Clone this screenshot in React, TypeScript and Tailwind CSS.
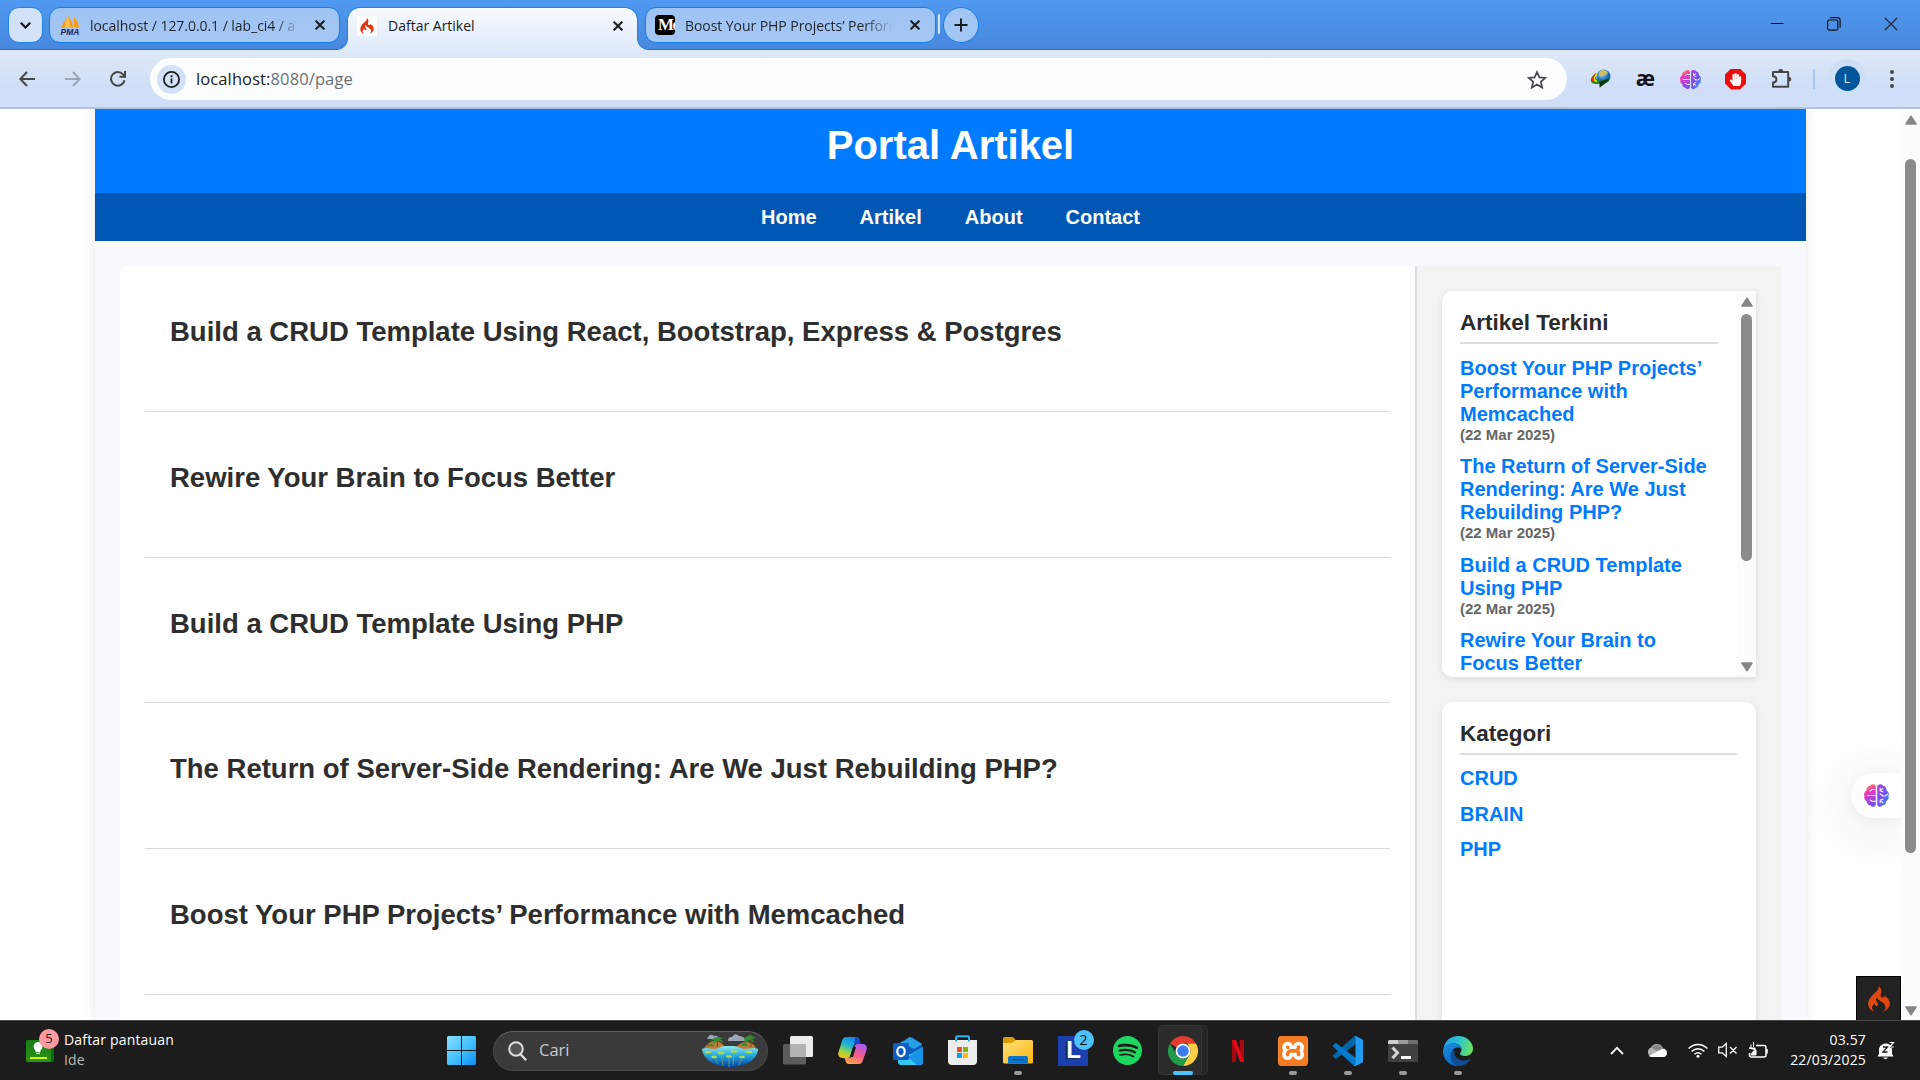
import type { ReactNode } from "react";
import { SiCodeigniter, SiSpotify, SiXampp } from "react-icons/si";
import { FaHandPaper } from "react-icons/fa";

const articles = [
  "Build a CRUD Template Using React, Bootstrap, Express & Postgres",
  "Rewire Your Brain to Focus Better",
  "Build a CRUD Template Using PHP",
  "The Return of Server-Side Rendering: Are We Just Rebuilding PHP?",
  "Boost Your PHP Projects’ Performance with Memcached",
];

const recent = [
  "Boost Your PHP Projects’ Performance with Memcached",
  "The Return of Server-Side Rendering: Are We Just Rebuilding PHP?",
  "Build a CRUD Template Using PHP",
  "Rewire Your Brain to Focus Better",
];

const categories = ["CRUD", "BRAIN", "PHP"];

function CloseX({ size = 10, w = 2 }: { size?: number; w?: number }) {
  return (
    <svg width={size} height={size} viewBox="0 0 10 10" className="shrink-0" stroke="#1b1b1b" strokeWidth={w} fill="none">
      <path d="M.6.6l8.8 8.8M9.4.6L.6 9.4" />
    </svg>
  );
}

function Brain({ size, id }: { size: number; id: string }) {
  return (
    <svg width={size} height={size} viewBox="0 0 24 24" className="shrink-0">
      <defs>
        <linearGradient id={id + "l"} x1="0.3" y1="0" x2="0.6" y2="1">
          <stop offset="0" stopColor="#fb923c" />
          <stop offset="0.35" stopColor="#f032c0" />
          <stop offset="1" stopColor="#6f55f5" />
        </linearGradient>
        <linearGradient id={id + "r"} x1="0" y1="0" x2="1" y2="1">
          <stop offset="0" stopColor="#b43be0" />
          <stop offset="0.55" stopColor="#6a55f0" />
          <stop offset="1" stopColor="#22b0ff" />
        </linearGradient>
      </defs>
      <path
        d="M11.3 3.2C10.700.6 6.700.4 5.600 2.900 3.200 3 2 5.200 2.500 7.200 0 8.300-.3 11 .5 12.500-.2 14.500.8 16.600 2.600 17.200 2.600 20 4.300 21.600 6.200 21.400 7.500 23.500 10.800 23.300 11.300 20.800Z"
        fill={`url(#${id}l)`}
      />
      <path
        d="M12.700 3.200C13.300.6 17.300.4 18.400 2.900 20.800 3 22 5.200 21.500 7.200 24 8.300 24.300 11 23.500 12.500 24.200 14.500 23.200 16.600 21.400 17.200 21.400 20 19.700 21.600 17.800 21.400 16.500 23.500 13.200 23.300 12.700 20.800Z"
        fill={`url(#${id}r)`}
      />
      <path
        d="M11.300 6.200H7.500L5.500 8M11.300 12H3M11.300 17.600H8L5.500 16M15.500 4.500V7.500L18.500 8.500M15.500 7L18.500 5M17 12.500H20.500L23 10.500M15 10L18.500 12.500M15.500 19.500V16.500L18.500 15.500M15.500 17L18.500 19"
        stroke="#f6eaff"
        strokeWidth="1.1"
        fill="none"
      />
    </svg>
  );
}

function WindowBar() {
  return (
    <div className="flex h-[50px] items-start border-b border-[#0f78dc] bg-linear-to-b from-[#5099f0] to-[#4788de] pl-2 pt-[7px]">
      <div className="flex h-[36px] w-[35px] items-center justify-center rounded-[11px] border border-[#1b84e6] bg-[#d3e2f8]">
        <svg width="11" height="7" viewBox="0 0 11 7" fill="none" stroke="#1b1b1b" strokeWidth="2.200">
          <path d="M.8.8l4.700 4.700L10.200.8" />
        </svg>
      </div>
      <div className="ml-[6px] flex h-[36px] w-[291px] items-center rounded-[11px] border border-[#0f80e8] bg-linear-to-b from-[#9fc4f3] to-[#a4c6f3] pl-[10px] pr-[14px]">
        <svg width="21" height="20" viewBox="0 0 21 20" className="shrink-0 overflow-visible">
          <path d="M7 12V3C5 5 2.500 9 1 13l6-1ZM8 12V1c2.500 2.500 4.500 7 5 11H8ZM14 12V1.500c2.500 3 4.500 7 5 11l-5-.5Z" fill="#f89c0e" />
          <path d="M5 12C5 8 6 5 7 3v9ZM10 12c0-3-.5-7-2-10v10Z" fill="#ffc355" />
          <text x="10" y="20" fontSize="8.500" fontWeight="700" fontStyle="italic" textAnchor="middle" textLength="19" fill="#20235e" fontFamily="Liberation Sans, sans-serif">
            PMA
          </text>
        </svg>
        <span className="ml-[9px] w-[210px] overflow-hidden whitespace-nowrap text-[14px] tracking-[-0.05px] text-[#1f242c] [mask-image:linear-gradient(to_right,black_88%,transparent_100%)]">
          localhost / 127.0.0.1 / lab_ci4 / a
        </span>
        <span className="ml-auto flex">
          <CloseX />
        </span>
      </div>
      <div className="relative ml-[7px] flex h-[43px] w-[291px] items-start rounded-t-[13px] border-x border-t border-[#1b84e6] bg-linear-to-b from-[#f7fafe] to-[#e0eaf9]">
        <span className="absolute bottom-0 -left-[12px] h-3 w-3 bg-[radial-gradient(circle_at_0_0,transparent_11px,#0f78dc_11.500px,#e0eaf9_12.500px)]" />
        <span className="absolute -right-[12px] bottom-0 h-3 w-3 bg-[radial-gradient(circle_at_100%_0,transparent_11px,#0f78dc_11.500px,#e0eaf9_12.500px)]" />
        <div className="flex h-[35px] w-full items-center pl-[9px] pr-[14px]">
          <span className="flex h-5 w-5 items-center justify-center bg-white">
            <SiCodeigniter size={16} color="#dd3510" />
          </span>
          <span className="ml-[11px] text-[14px] text-[#1b1b1b]">Daftar Artikel</span>
          <span className="ml-auto flex">
            <CloseX />
          </span>
        </div>
      </div>
      <div className="ml-[7px] flex h-[36px] w-[291px] items-center rounded-[11px] border border-[#0f80e8] bg-linear-to-b from-[#9fc4f3] to-[#a4c6f3] pl-[9px] pr-[15px]">
        <span className="flex h-5 w-5 items-center overflow-hidden rounded-[4px] bg-black pl-[3px] font-['Liberation_Serif',serif] text-[17px] font-bold tracking-[-1.5px] text-white">Me</span>
        <span className="ml-[10px] w-[208px] overflow-hidden whitespace-nowrap text-[14px] tracking-[-0.06px] text-[#1f242c] [mask-image:linear-gradient(to_right,black_86%,transparent)]">
          Boost Your PHP Projects’ Performance
        </span>
        <span className="ml-auto flex">
          <CloseX />
        </span>
      </div>
      <span className="ml-[2px] mt-[7px] h-5 w-[2px] rounded bg-[#d5e5fa]" />
      <span className="ml-[3px] flex h-[36px] w-[36px] items-center justify-center rounded-full border border-[#0f80e8] bg-[#a2c6f4]">
        <svg width="14" height="14" viewBox="0 0 14 14" stroke="#1b1b1b" strokeWidth="1.900">
          <path d="M7 .5v13M.5 7h13" />
        </svg>
      </span>
      <div className="ml-auto mr-[22px] mt-[10px] flex items-center gap-[43px]">
        <svg width="14" height="14" viewBox="0 0 14 14" stroke="#111">
          <path d="M.5 6.500h13" />
        </svg>
        <svg width="14" height="14" viewBox="0 0 14 14" stroke="#111" fill="none" strokeWidth="1.200">
          <rect x=".6" y="3" width="10.200" height="10.200" rx="1.800" />
          <path d="M3 .7h7.500a2.600 2.600 0 0 1 2.600 2.600v7.500" />
        </svg>
        <span className="flex">
          <CloseX size={14} w={0.9} />
        </span>
      </div>
    </div>
  );
}

function Toolbar() {
  return (
    <div className="flex h-[59px] items-center border-b-2 border-[#b4c3dc] bg-linear-to-b from-[#dfe9f8] to-[#d0dff7] to-60% pl-[19px]">
      <svg width="16" height="16" viewBox="0 0 16 16" fill="none" stroke="#474747" strokeWidth="2">
        <path d="M16 8H1.500M8 1L1.300 8 8 15" />
      </svg>
      <svg width="16" height="16" viewBox="0 0 16 16" fill="none" stroke="#9aa5b5" strokeWidth="2" className="ml-[30px]">
        <path d="M0 8h14.500M8 1l6.700 7L8 15" />
      </svg>
      <svg width="16" height="16" viewBox="0 0 16 16" fill="none" stroke="#474747" strokeWidth="2" className="ml-[29px]">
        <path d="M14.500 9.200A6.800 6.800 0 1 1 13 3.400L15 5.600M15 0v5.700H9.400" />
      </svg>
      <div className="mt-px ml-[24px] flex h-[42px] w-[1417px] items-center rounded-full bg-[#fcfdff] pl-[7px] pr-[20px]">
        <span className="flex h-[29px] w-[29px] items-center justify-center rounded-full bg-[#d3e2f8]">
          <svg width="17" height="17" viewBox="0 0 17 17" fill="none" stroke="#1f1f1f" strokeWidth="1.800">
            <circle cx="8.500" cy="8.500" r="7.600" />
            <path d="M8.500 7.500v5M8.500 4.300v1.900" />
          </svg>
        </span>
        <span className="ml-[10px] pt-px text-[16.500px] tracking-[0.11px] text-[#202124]">
          localhost:<span className="text-[#6b6f76]">8080/page</span>
        </span>
        <svg width="20" height="19" viewBox="0 0 20 19" className="ml-auto" fill="none" stroke="#474747" strokeWidth="1.700">
          <path d="M10 2l2.400 5.400 5.900.5-4.500 3.900 1.400 5.800L10 14.500l-5.200 3.100 1.400-5.800L1.700 7.900l5.900-.5Z" />
        </svg>
      </div>
      <svg width="21" height="20" viewBox="0 0 21 20" className="mt-px ml-[23px]">
        <defs>
          <radialGradient id="globe" cx=".4" cy=".3">
            <stop stopColor="#a9e0f5" />
            <stop offset="1" stopColor="#1261b8" />
          </radialGradient>
        </defs>
        <circle cx="13.500" cy="7.500" r="7" fill="url(#globe)" />
        <path d="M12 1c5 0 7 3 5 4s-4 0-6 2-3-4 1-6Z" fill="#d6bd57" />
        <path d="M6 4C0 8-.5 13 3 14.500c2 1 5 .5 7 .3v3.700l8.500-6.500V9L10 12c-3-1-5-3-4-8Z" fill="#1f8d18" />
        <path d="M6 5C1 9 1 12 5 12.500" stroke="#f42b0c" strokeWidth="1.500" fill="none" />
        <path d="M6.800 5C3 9 4 11.500 7 12.500" stroke="#ffe31e" strokeWidth="1.500" fill="none" />
        <path d="M9.500 12.500v6L19 11l-1-1Z" fill="#06350a" />
      </svg>
      <span className="mt-[-1px] ml-[24px] w-[20px] text-center font-['Noto_Sans',sans-serif] text-[21px] leading-5 font-bold tracking-[-1px] text-[#17131a]">æ</span>
      <span className="mt-px ml-[25px] flex">
        <Brain size={21} id="ba" />
      </span>
      <span className="mt-px ml-[24px] flex h-[21px] w-[21px] items-center justify-center bg-[#ee0c0c] [clip-path:polygon(29%_0,71%_0,100%_29%,100%_71%,71%_100%,29%_100%,0_71%,0_29%)]">
        <FaHandPaper size={13} color="#fff" />
      </span>
      <svg width="21" height="21" viewBox="0 0 21 21" className="ml-[25px]" fill="none" stroke="#474747" strokeWidth="2">
        <path d="M2 4h15.200v14.800H2v-4.300c4.500-.2 4.500-6 0-6.200Z" strokeLinejoin="round" />
        <path d="M7.200 3.500a2.500 2.500 0 0 1 5 0ZM18 9a2.300 2.300 0 0 1 0 4.600Z" fill="#474747" stroke="none" />
      </svg>
      <span className="ml-[21px] h-5 w-[2px] bg-[#a5c8f5]" />
      <span className="ml-[12px] flex h-10 w-10 items-center justify-center rounded-full bg-[#cfdff6]">
        <span className="flex h-[25px] w-[25px] items-center justify-center rounded-full bg-[#00569d] text-[13px] text-[#d5e5f5]">L</span>
      </span>
      <span className="ml-[23px] flex flex-col gap-[3px]">
        {[0, 1, 2].map((i) => (
          <span key={i} className="h-[4px] w-[4px] rounded-full bg-[#474747]" />
        ))}
      </span>
    </div>
  );
}

function ScrollArrow({ down = false }: { down?: boolean }) {
  return (
    <svg width="12" height="10" viewBox="0 0 12 10" className={down ? "rotate-180" : ""}>
      <path d="M6 1.200L11 9H1Z" fill="#858585" stroke="#858585" strokeWidth="1.500" strokeLinejoin="round" />
    </svg>
  );
}

function SideTitle({ children }: { children: ReactNode }) {
  return <h3 className="h-[35px] border-b-2 border-[#ddd] text-[22.500px] leading-[27px] font-bold text-[#2b2b2b]">{children}</h3>;
}

function Page() {
  return (
    <div className="relative flex h-[911px] overflow-hidden bg-white font-['Liberation_Sans',Arial,sans-serif]">
      <div className="ml-[95px] w-[1711px] shrink-0 bg-[#f8f9fc] shadow-[0_0_12px_rgba(0,0,0,0.1)]">
        <header className="flex h-[84px] justify-center bg-[#007bff] pt-[13px]">
          <h1 className="text-[40px] leading-[46px] font-bold text-white">Portal Artikel</h1>
        </header>
        <nav className="flex h-[48px] items-center justify-center gap-[43px] bg-[#0056b3] text-[20px] font-bold text-white">
          <a>Home</a>
          <a>Artikel</a>
          <a>About</a>
          <a>Contact</a>
        </nav>
        <div className="flex h-[800px] px-[25px] pt-[25px]">
          <main className="w-[1295px] rounded-tl-[7px] rounded-tr-[7px] bg-white px-[25px]">
            {articles.map((title) => (
              <article key={title} className="h-[145.750px] border-b border-[#d9dcde] pl-[25px] pt-[50px]">
                <h2 className="text-[27.500px] leading-[32px] font-bold text-[#2e2e2e]">{title}</h2>
              </article>
            ))}
          </main>
          <aside className="w-[366px] border-l-2 border-[#ddd] bg-[#f3f3f3] pl-[25px] pt-[25px]">
            <section className="flex h-[386px] w-[314px] overflow-hidden rounded-l-[10px] bg-white shadow-[0_2px_6px_rgba(0,0,0,0.1)]">
              <div className="w-[276px] pl-[18px] pt-[18px]">
                <SideTitle>Artikel Terkini</SideTitle>
                <ul className="pt-[12.700px]">
                  {recent.map((title) => (
                    <li key={title} className="mb-[11.500px] w-[258px] font-bold">
                      <a className="block text-[20px] leading-[23px] text-[#007bff]">{title}</a>
                      <span className="block h-[18px] text-[15px] leading-[18px] text-[#666]">(22 Mar 2025)</span>
                    </li>
                  ))}
                </ul>
              </div>
              <div className="ml-auto flex w-[19px] flex-col items-center bg-[#fcfcfc] pt-[6px] pb-[5px]">
                <ScrollArrow />
                <span className="mt-[7px] h-[247px] w-[11px] rounded-full bg-[#8b8b8b]" />
                <span className="mt-auto flex">
                  <ScrollArrow down />
                </span>
              </div>
            </section>
            <section className="mt-[25px] h-[500px] w-[314px] rounded-[10px] bg-white px-[18px] pt-[18px] pr-[19px] shadow-[0_2px_6px_rgba(0,0,0,0.1)]">
              <SideTitle>Kategori</SideTitle>
              <ul className="flex flex-col gap-[12.500px] pt-[12px] text-[20px] leading-[23px] font-bold text-[#007bff]">
                {categories.map((c) => (
                  <li key={c}>{c}</li>
                ))}
              </ul>
            </section>
          </aside>
        </div>
      </div>
      <div className="absolute top-[664px] right-[19px] flex h-[45px] w-[50px] items-center rounded-l-full bg-white pl-[13px] shadow-[0_8px_60px_rgba(0,0,0,0.12),0_2px_14px_rgba(0,0,0,0.05)]">
        <Brain size={25} id="bb" />
      </div>
      <div className="absolute right-[19px] bottom-0 flex h-[44px] w-[45px] items-center justify-center border border-b-0 border-black bg-[#222]">
        <SiCodeigniter size={26} color="#e2470f" />
      </div>
      <div className="relative ml-auto flex w-[19px] flex-col items-center bg-[#fcfcfc] pt-[6px] pb-1">
        <ScrollArrow />
        <span className="mt-[34px] h-[694px] w-[11px] rounded-full bg-[#8b8b8b]" />
        <span className="mt-auto flex">
          <ScrollArrow down />
        </span>
      </div>
    </div>
  );
}

function TaskButton({ children, running = false, active = false }: { children: ReactNode; running?: boolean; active?: boolean }) {
  return (
    <div className="relative flex h-[59px] w-[55px] items-center justify-center">
      {active && <span className="absolute top-[4px] left-[4px] h-[50px] w-[49px] rounded-[5px] border border-[#303030] bg-[#242424]" />}
      {active && <span className="absolute top-[4px] left-[3px] h-[50px] w-[44px] rounded-[5px] border border-[#393939] bg-[#2b2b2b]" />}
      <span className="relative flex">{children}</span>
      {running && !active && <span className="absolute bottom-[5px] h-[4px] w-2 rounded-full bg-[#9a9a9a]" />}
      {active && <span className="absolute bottom-[5px] h-[4px] w-5 rounded-full bg-[#4cc2ff]" />}
    </div>
  );
}

function Island() {
  return (
    <svg width="58" height="34" viewBox="0 0 58 34">
      <defs>
        <linearGradient id="sea" x1="0" y1="0" x2="0" y2="1">
          <stop stopColor="#8be9ef" />
          <stop offset=".45" stopColor="#25a9dc" />
          <stop offset="1" stopColor="#063f9e" />
        </linearGradient>
      </defs>
      <path d="M7 3q3-4 6-1 4-1 5 3H6ZM27 6q0-3 4-3 3-5 7-1 5 0 7 5H27Z" fill="#9aa5b5" />
      <path d="M3 14c5-6 8-7 11-7 4 0 8 2 10 7-7 2-14 2-21 0ZM34 14c4-4 7-6 11-6 4 0 8 2 10 6-6 3-14 3-21 0Z" fill="#bd7a35" />
      <path d="M1 15c4-2 8 0 13 0 4 0 6-3 9-3h10c4 0 6 3 11 3 5 0 9-2 13 0 0 10-12 18-28 18S2 25 1 15Z" fill="url(#sea)" />
      <path d="M8 7l7-4 8 1-4 1 4 3-6-1-5 3 1-4ZM43 4l6-3 6 3-4 1 3 4-5-3-5 3ZM6 11l5-1 3 2H6ZM40 10l5-1 2 3h-6Z" fill="#2f9134" />
      <path d="M17 6l-1 7M50 4v9" stroke="#7c4b20" />
      <g fill="#b5dc4a">
        <ellipse cx="7" cy="18" rx="3.500" ry="1.300" />
        <ellipse cx="20" cy="19" rx="3.500" ry="1.300" />
        <ellipse cx="33" cy="17.500" rx="3.500" ry="1.300" />
        <ellipse cx="48" cy="18" rx="3.500" ry="1.300" />
        <ellipse cx="13" cy="23" rx="3" ry="1.200" />
        <ellipse cx="28" cy="22.500" rx="3" ry="1.200" />
        <ellipse cx="41" cy="23" rx="3" ry="1.200" />
      </g>
      <path d="M20 19l2 13M28 22v11M33 17l-1 15M41 23l-3 8M13 23l4 7" stroke="#7fc060" strokeWidth=".6" />
    </svg>
  );
}

function Taskbar() {
  return (
    <div className="relative flex h-[60px] items-center border-t border-[#484848] bg-[#1c1c1c] text-white">
      <div className="relative ml-[26px] h-[22px] w-[28px] rounded-[2px] bg-[#0b6b10]">
        <div className="flex h-full w-[25px] flex-col items-center rounded-[2px] bg-linear-to-b from-[#178017] to-[#2b9212] pt-[2px]">
          <svg width="10" height="12" viewBox="0 0 10 12" fill="#fff" className="ml-[-2px]">
            <path d="M5 0a4.600 4.600 0 0 1 2.500 8.300V10h-5V8.300A4.600 4.600 0 0 1 5 0ZM3 10.700h4V12H3Z" />
          </svg>
          <span className="mt-[3px] h-[2.500px] w-[17px] bg-[#d9f20c]" />
        </div>
        <span className="absolute -top-[11px] left-[13px] flex h-5 w-5 items-center justify-center rounded-full bg-[#ff99a4] text-[13px] text-[#222]">5</span>
      </div>
      <div className="mt-[-1px] ml-[10px] w-[200px] text-[14px] leading-5 tracking-[0.17px]">
        <div>Daftar pantauan</div>
        <div className="text-[#b9b9b9]">Ide</div>
      </div>
      <svg width="29" height="29" viewBox="0 0 29 29" className="ml-[183px]">
        <defs>
          <linearGradient id="win" x1="0" y1="0" x2="1" y2="1">
            <stop stopColor="#8ae0ff" />
            <stop offset=".5" stopColor="#46c3fb" />
            <stop offset="1" stopColor="#0a8df5" />
          </linearGradient>
        </defs>
        <path d="M1 0h13v14H0V1ZM15 0h13l1 1v13H15ZM0 15h14v14H1l-1-1ZM15 15h14v13l-1 1H15Z" fill="url(#win)" />
      </svg>
      <div className="ml-[17px] flex h-10 w-[275px] items-center rounded-full border border-[#4a4a4a] border-t-[#626262] bg-[#3a3a3a] pl-[14px] pr-[8px]">
        <svg width="19" height="20" viewBox="0 0 19 20" fill="none" stroke="#dcdcdc" strokeWidth="2">
          <circle cx="8" cy="8" r="6.800" fill="#555" />
          <path d="M12.500 13.200l5 5.300" strokeWidth="2.400" strokeLinecap="round" />
        </svg>
        <span className="ml-[12px] text-[16.500px] text-[#c9c9c9]">Cari</span>
        <span className="ml-auto flex">
          <Island />
        </span>
      </div>
      <div className="ml-[2px] flex">
        <TaskButton>
          <svg width="30" height="29" viewBox="0 0 30 29">
            <rect y="8" width="23" height="20.500" rx="1.500" fill="#5c5c5c" />
            <rect x="7" width="23" height="21" rx="1.500" fill="#ebebeb" />
            <path d="M7 8h16v13H8.500L7 19.500Z" fill="#b3b3b3" />
          </svg>
        </TaskButton>
        <TaskButton>
          <svg width="29" height="27" viewBox="0 0 29 27" className="mt-[-1px]">
            <defs>
              <linearGradient id="c1" x1=".6" y1="0" x2=".2" y2="1">
                <stop stopColor="#1583ee" />
                <stop offset=".4" stopColor="#22b6cf" />
                <stop offset=".75" stopColor="#a9d336" />
                <stop offset="1" stopColor="#f6c514" />
              </linearGradient>
              <linearGradient id="c2" x1=".7" y1="0" x2=".3" y2="1">
                <stop stopColor="#a65bf5" />
                <stop offset=".5" stopColor="#f65a8e" />
                <stop offset="1" stopColor="#ffa54a" />
              </linearGradient>
            </defs>
            <path d="M8 0h10c2 0 3 1 3.500 3l1 4h-4c-2 0-3 1-3.500 3l-2.500 8c-.5 2-1 3-3 3H4c-3 0-4.500-3-3.500-6L4 4c1-3 2-4 4-4Z" fill="url(#c1)" />
            <path d="M21 27H11c-2 0-3-1-3.500-3l-1-3h4c2 0 3-1 3.500-3l2.500-8c.5-2 1-3 3-3H25c3 0 4.500 3 3.500 6L25 23c-1 3-2 4-4 4Z" fill="url(#c2)" />
            <path d="M17 0h1c2 0 3 1 3.500 3l1 4h-4c-1 0-2 .5-2.500 1Z" fill="#164ac7" />
            <path d="M12 20l3-10h3l-3 10Z" fill="#1c1c1c" />
          </svg>
        </TaskButton>
        <TaskButton>
          <svg width="30" height="28" viewBox="0 0 30 28">
            <path d="M5 7L17 0l12 7v4L17 19 5 14Z" fill="#34b8ec" />
            <path d="M10 4l9-4 10 7v4L14 20Z" fill="#0a5ebf" />
            <path d="M17 0l12 7-8 5-12-6Z" fill="#299fe3" />
            <path d="M30 10v15q0 3-3 3H8q-3 0-3-3v-8h13Z" fill="#31c8f4" />
            <path d="M30 10L15 20l9 8h3q3 0 3-3Z" fill="#1695e6" />
            <rect y="6" width="16" height="17" rx="1.500" fill="#0c5fc5" />
            <ellipse cx="8" cy="14.500" rx="3.700" ry="4.600" fill="none" stroke="#fff" strokeWidth="2.200" />
          </svg>
        </TaskButton>
        <TaskButton>
          <svg width="29" height="31" viewBox="0 0 29 31">
            <path d="M8 8V2.500Q8 1.200 9.300 1.200h10.400Q21 1.200 21 2.500V8" fill="none" stroke="#22b5ee" strokeWidth="2" />
            <path d="M0 5h29v21q0 4-4 4H4q-4 0-4-4Z" fill="#ededed" />
            <path d="M7 5h2v1.500H7ZM20 5h2v1.500h-2Z" fill="#22b5ee" />
            <path d="M9 12h5v5H9Z" fill="#f25022" />
            <path d="M15 12h5v5h-5Z" fill="#7fba00" />
            <path d="M9 18h5v5H9Z" fill="#00a4ef" />
            <path d="M15 18h5v5h-5Z" fill="#ffb900" />
          </svg>
        </TaskButton>
        <TaskButton running>
          <svg width="30" height="27" viewBox="0 0 30 27">
            <defs>
              <linearGradient id="fold" x1="0" y1="0" x2="1" y2="1">
                <stop stopColor="#ffdf76" />
                <stop offset="1" stopColor="#fbb715" />
              </linearGradient>
            </defs>
            <path d="M0 1.500Q0 0 1.500 0H9q1 0 2 1l2 2.500h4V10H0Z" fill="#dc9c06" />
            <path d="M0 6h9l4-3h15.500Q30 3 30 4.500V25q0 1.500-1.500 1.500h-27Q0 26.500 0 25Z" fill="url(#fold)" />
            <path d="M5 26.500V21q0-2 2-2h16q2 0 2 2v5.500Z" fill="#0f74cc" />
            <path d="M9 22.800h12" stroke="#064e94" />
          </svg>
        </TaskButton>
        <TaskButton>
          <span className="relative flex h-[30px] w-[30px] items-center justify-center bg-[#1c3fae] font-['Liberation_Sans',sans-serif] text-[24px] font-bold text-white [text-shadow:-2px_1px_0_#132b62]">
            <span className="mt-[-1px] ml-[2px]">L</span>
            <span className="absolute -top-[6px] left-4 flex h-5 w-5 items-center justify-center rounded-full bg-[#4cc2ff] font-['Open_Sans',sans-serif] text-[14px] font-normal text-[#111] [text-shadow:none]">2</span>
          </span>
        </TaskButton>
        <TaskButton>
          <SiSpotify size={29} color="#1ed760" />
        </TaskButton>
        <TaskButton active>
          <svg width="30" height="30" viewBox="0 0 48 48">
            <path d="M24 0A24 24 0 0 1 44.800 12H24A12 12 0 0 0 13.600 18L3.200 12A24 24 0 0 1 24 0Z" fill="#e33b2e" />
            <path d="M44.800 12A24 24 0 0 1 24 48L34.400 30A12 12 0 0 0 34.400 18L31 12Z" fill="#ffcd40" />
            <path d="M3.200 12A24 24 0 0 0 24 48l10.400-18A12 12 0 0 1 13.600 30Z" fill="#1f9d4b" />
            <circle cx="24" cy="24" r="12" fill="#fff" />
            <circle cx="24" cy="24" r="9.300" fill="#3b7ded" />
          </svg>
        </TaskButton>
        <TaskButton>
          <svg width="12" height="22" viewBox="0 0 12 22">
            <path d="M0 0h4v21.600L0 22ZM8 0h4v22l-4-.4Z" fill="#a90812" />
            <path d="M0 0h4l8 22-4-.4Z" fill="#e50914" />
          </svg>
        </TaskButton>
        <TaskButton running>
          <span className="flex rounded-[5px] bg-white">
            <SiXampp size={30} color="#f57b22" />
          </span>
        </TaskButton>
        <TaskButton running>
          <svg width="30" height="30" viewBox="0 0 100 100">
            <path d="M96.460 10.800L75.860.880C73.470-.270 70.620.210 68.750 2.080L1.300 63.580C-.520 65.240-.510 68.090 1.300 69.750L6.810 74.750C8.300 76.100 10.530 76.200 12.130 74.990L93.360 13.370C96.090 11.300 100 13.250 100 16.670V16.430C100 14.030 98.620 11.840 96.460 10.800Z" fill="#0065a9" />
            <path d="M96.460 89.200L75.860 99.120C73.470 100.270 70.620 99.790 68.750 97.920L1.300 36.420C-.520 34.760-.510 31.910 1.300 30.250L6.810 25.250C8.300 23.900 10.530 23.800 12.130 25.010L93.360 86.630C96.090 88.700 100 86.750 100 83.330V83.570C100 85.970 98.620 88.160 96.460 89.200Z" fill="#007acc" />
            <path d="M75.860 99.130C73.470 100.270 70.620 99.790 68.750 97.920C71.060 100.220 75 98.590 75 95.330V4.670C75 1.410 71.060-.220 68.750 2.080C70.620.210 73.470-.270 75.860.870L96.460 10.780C98.620 11.820 100 14.010 100 16.410V83.590C100 85.990 98.620 88.180 96.460 89.220Z" fill="#1f9cf0" />
          </svg>
        </TaskButton>
        <TaskButton running>
          <svg width="30" height="22" viewBox="0 0 30 22">
            <rect width="30" height="22" rx="1.500" fill="#414141" />
            <path d="M0 4V1.500Q0 0 1.500 0H10v4Z" fill="#cfcfcf" />
            <path d="M10 0h10v4H10Z" fill="#9a9a9a" />
            <path d="M20 0h8.500Q30 0 30 1.500V4H20Z" fill="#707070" />
            <path d="M4.500 7.500l5 5.300-5 5.300" stroke="#d4d4d4" strokeWidth="3" fill="none" />
            <path d="M13 16h10v3H13Z" fill="#f5f5f5" />
          </svg>
        </TaskButton>
        <TaskButton running>
          <svg width="30" height="30" viewBox="0 0 30 30">
            <defs>
              <linearGradient id="e1" x1="0" y1=".3" x2="1" y2=".5">
                <stop stopColor="#1f9fe6" />
                <stop offset=".5" stopColor="#2bc3d2" />
                <stop offset="1" stopColor="#6be35a" />
              </linearGradient>
              <linearGradient id="e2" x1="0" y1="0" x2=".5" y2="1">
                <stop stopColor="#1a8ee0" />
                <stop offset="1" stopColor="#0b68c9" />
              </linearGradient>
            </defs>
            <path d="M.5 13C1.500 5 7.500 0 15 0c9 0 15 6.500 15 12.500 0 5-4 7.500-8 7.500-3.500 0-5-1.300-5-2.300s1.500-1.700 1.500-4C18.500 10 15 7.500 11 7.500 5.500 7.500 1.500 10 .5 13Z" fill="url(#e1)" />
            <path d="M0 15C0 10.500 5 7.500 10 7.500c5 0 8.500 3 8.500 6-1-1.500-2.500-2-4-2-3.500 0-6 3-6 7.500 0 5 4 9.500 8.500 11C7.500 31 0 24 0 15Z" fill="url(#e2)" />
            <path d="M11.500 14c-1.500 6 3.500 10.500 9 10.500 3 0 5.500-1 7.500-2-2.500 4.500-7 7.500-12 7.500-4.500-.5-8.500-5-8.500-10 0-3 1.500-5 4-6Z" fill="#104c94" />
          </svg>
        </TaskButton>
      </div>
      <div className="ml-auto mr-[25px] flex items-center">
        <svg width="14" height="9" viewBox="0 0 14 9" fill="none" stroke="#f2f2f2" strokeWidth="1.900" className="mt-[-1px]">
          <path d="M1 8l6-6.200L13 8" />
        </svg>
        <svg width="20" height="13" viewBox="0 0 20 13" className="mt-[-1px] ml-[23px]">
          <path d="M5 13a5 5 0 0 1-1-9.500A6.500 6.500 0 0 1 16 4.500 4 4 0 0 1 16 13Z" fill="#b5b5b5" />
          <path d="M5 3A6.300 6.300 0 0 1 16 4.500L10 7 4 3.500Z" fill="#868686" />
          <path d="M2 12L15 5c5-.5 6.500 6.500 2 8H4.500Q3 13 2 12Z" fill="#fff" />
        </svg>
        <svg width="20" height="15" viewBox="0 0 20 15" className="mt-[-1px] ml-[21px]" fill="none" stroke="#fff" strokeWidth="1.500">
          <path d="M.6 5.500c5.400-5.400 13.400-5.400 18.800 0M3.600 8.500c3.800-3.800 9-3.800 12.800 0M6.500 11.300c2.200-2 4.800-2 7 0" />
          <circle cx="10" cy="13.200" r="1.500" fill="#fff" stroke="none" />
        </svg>
        <svg width="20" height="16" viewBox="0 0 20 16" className="mt-[-1px] ml-[10px]" fill="none" stroke="#fff" strokeWidth="1.300">
          <path d="M.7 5.200h3.500L8.300 1.500v13L4.200 10.800H.7ZM12 5l6.500 6.500M18.500 5L12 11.500" />
        </svg>
        <svg width="21" height="17" viewBox="0 0 21 17" className="mt-[-1px] ml-[10px]" fill="none" stroke="#fff" strokeWidth="1.500">
          <path d="M8 3.500h8q2 0 2 2v7.500q0 2-2 2H3.500q-2 0-2-2V11M19 7v4.500" />
          <path d="M3 7V2.500M5.500 5V0M1 6h6v2.500L4.500 10 3 13h5V8Z" fill="#fff" strokeWidth="1" />
        </svg>
        <div className="mt-[-1px] ml-[10px] w-[87px] text-right text-[14px] leading-5 tracking-[0.15px]">
          <div>03.57</div>
          <div>22/03/2025</div>
        </div>
        <svg width="18" height="19" viewBox="0 0 18 19" className="ml-[11px]">
          <path d="M2 9c0-8 13-9 13 0v4l1.500 2.500H.5L2 13ZM6 16.500h5q-2.500 3.500-5 0Z" fill="#fff" />
          <path d="M6 6h4.500L6 11h4.500" stroke="#1c1c1c" fill="none" strokeWidth="1.300" />
          <path d="M11 0h7v7h-5V3Z" fill="#1c1c1c" />
          <path d="M12.500 1.500h4L12.500 6h4.200" stroke="#fff" fill="none" strokeWidth="1.200" />
        </svg>
      </div>
    </div>
  );
}

export default function App() {
  return (
    <div className="h-[1080px] w-[1920px] overflow-hidden font-['Open_Sans',sans-serif]">
      <WindowBar />
      <Toolbar />
      <Page />
      <Taskbar />
    </div>
  );
}
